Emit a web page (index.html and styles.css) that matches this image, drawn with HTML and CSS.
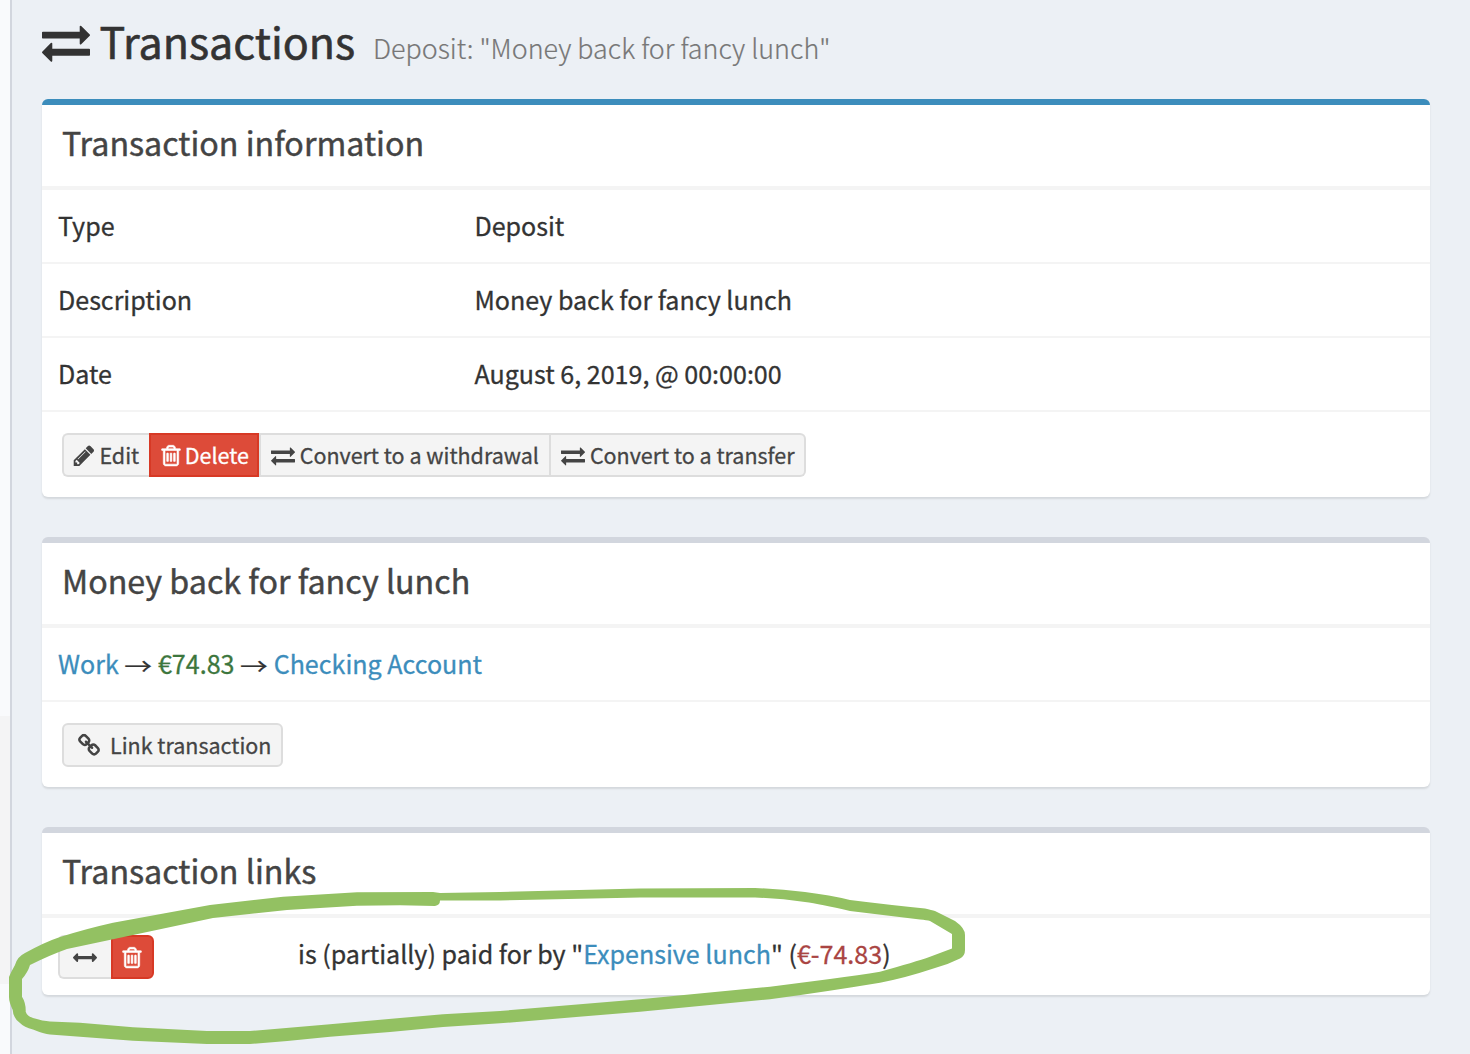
FILE: index.html
```html
<!DOCTYPE html>
<html lang="en">
<head>
<meta charset="utf-8">
<title>Transactions</title>
<link rel="stylesheet" href="styles.css">
</head>
<body>
<svg class="sprite" aria-hidden="true">
  <symbol id="exchange" viewBox="0 0 1792 1792"><path d="M1792 1184v192q0 13-9.5 22.5t-22.5 9.5h-1376v192q0 13-9.5 22.5t-22.5 9.5q-12 0-24-10l-319-320q-9-9-9-22 0-14 9-23l320-320q9-9 23-9 13 0 22.5 9.5t9.5 22.5v192h1376q13 0 22.5 9.5t9.5 22.5zm0-544q0 14-9 23l-320 320q-9 9-23 9-13 0-22.5-9.5t-9.5-22.5v-192h-1376q-13 0-22.5-9.5t-9.5-22.5v-192q0-13 9.5-22.5t22.5-9.5h1376v-192q0-14 9-23t23-9q12 0 24 10l319 319q9 9 9 23z"/></symbol>
  <symbol id="pencil" viewBox="0 0 1792 1792"><path d="M491 1536l91-91-235-235-91 91v107h128v128h107zm523-928q0-22-22-22-10 0-17 7l-542 542q-7 7-7 17 0 22 22 22 10 0 17-7l542-542q7-7 7-17zm-54-192l416 416-832 832h-416v-416zm683 96q0 53-37 90l-166 166-416-416 166-165q36-38 90-38 53 0 91 38l235 234q37 39 37 91z"/></symbol>
  <symbol id="trash" viewBox="0 0 1792 1792"><path d="M704 736v576q0 14-9 23t-23 9h-64q-14 0-23-9t-9-23v-576q0-14 9-23t23-9h64q14 0 23 9t9 23zm256 0v576q0 14-9 23t-23 9h-64q-14 0-23-9t-9-23v-576q0-14 9-23t23-9h64q14 0 23 9t9 23zm256 0v576q0 14-9 23t-23 9h-64q-14 0-23-9t-9-23v-576q0-14 9-23t23-9h64q14 0 23 9t9 23zm128 724v-948h-896v948q0 22 7 40.5t14.5 27 10.5 8.5h832q3 0 10.5-8.5t14.5-27 7-40.5zm-672-1076h448l-48-117q-7-9-17-11h-317q-10 2-17 11zm928 32v64q0 14-9 23t-23 9h-96v948q0 83-47 143.5t-113 60.5h-832q-66 0-113-58.5t-47-141.5v-952h-96q-14 0-23-9t-9-23v-64q0-14 9-23t23-9h309l70-167q15-37 54-63t79-26h320q40 0 79 26t54 63l70 167h309q14 0 23 9t9 23z"/></symbol>
  <symbol id="link" viewBox="0 0 1792 1792"><path d="M1520 1216q0-40-28-68l-208-208q-28-28-68-28-42 0-72 32 3 3 19 18.5t21.5 21.5 15 19 13 25.5 3.5 27.5q0 40-28 68t-68 28q-15 0-27.5-3.5t-25.5-13-19-15-21.5-21.5-18.5-19q-33 31-33 73 0 40 28 68l206 207q27 27 68 27 40 0 68-26l147-146q28-28 28-67zm-703-705q0-40-28-68l-206-207q-28-28-68-28-39 0-68 27l-147 146q-28 28-28 67 0 40 28 68l208 208q27 27 68 27 42 0 72-31-3-3-19-18.5t-21.5-21.5-15-19-13-25.5-3.5-27.5q0-40 28-68t68-28q15 0 27.5 3.5t25.5 13 19 15 21.5 21.5 18.5 19q33-31 33-73zm895 705q0 120-85 203l-147 146q-83 83-203 83-121 0-204-85l-206-207q-83-83-83-203 0-123 88-209l-88-88q-86 88-208 88-120 0-204-84l-208-208q-84-84-84-204t85-203l147-146q83-83 203-83 121 0 204 85l206 207q83 83 83 203 0 123-88 209l88 88q86-88 208-88 120 0 204 84l208 208q84 84 84 204z"/></symbol>
  <symbol id="arrows-h" viewBox="0 0 1792 1792"><path d="M1792 896q0 26-19 45l-256 256q-19 19-45 19t-45-19-19-45v-128h-1024v128q0 26-19 45t-45 19-45-19l-256-256q-19-19-19-45t19-45l256-256q19-19 45-19t45 19 19 45v128h1024v-128q0-26 19-45t45-19 45 19l256 256q19 19 19 45z"/></symbol>
</svg>
<div class="layout">
  <aside class="sidebar"><div class="sidebar-item"></div></aside>
  <main class="content">
    <header class="page-header">
      <svg class="icon icon-large"><use href="#exchange"/></svg>
      <h1 class="page-title">Transactions</h1>
      <span class="page-subtitle">Deposit: "Money back for fancy lunch"</span>
    </header>

    <section class="box box-primary">
      <h2 class="box-header">Transaction information</h2>
      <dl class="row"><dt>Type</dt><dd>Deposit</dd></dl>
      <dl class="row"><dt>Description</dt><dd>Money back for fancy lunch</dd></dl>
      <dl class="row"><dt>Date</dt><dd>August 6, 2019, @ 00:00:00</dd></dl>
      <div class="box-footer">
        <div class="btn-group">
          <a class="btn btn-edit"><svg class="icon"><use href="#pencil"/></svg><span>Edit</span></a>
          <a class="btn btn-danger btn-delete"><svg class="icon"><use href="#trash"/></svg><span>Delete</span></a>
          <a class="btn btn-withdrawal"><svg class="icon"><use href="#exchange"/></svg><span>Convert to a withdrawal</span></a>
          <a class="btn btn-transfer"><svg class="icon"><use href="#exchange"/></svg><span>Convert to a transfer</span></a>
        </div>
      </div>
    </section>

    <section class="box">
      <h2 class="box-header">Money back for fancy lunch</h2>
      <div class="row flow"><a class="link">Work</a><span class="arrow">→</span><span class="income">€74.83</span><span class="arrow">→</span><a class="link">Checking Account</a></div>
      <div class="box-footer">
        <div class="btn-group">
          <a class="btn btn-link"><svg class="icon"><use href="#link"/></svg><span>Link transaction</span></a>
        </div>
      </div>
    </section>

    <section class="box">
      <h2 class="box-header">Transaction links</h2>
      <div class="link-row">
        <div class="btn-group">
          <a class="btn btn-switch"><svg class="icon"><use href="#arrows-h"/></svg></a>
          <a class="btn btn-danger btn-remove"><svg class="icon"><use href="#trash"/></svg></a>
        </div>
        <p class="link-text">is (partially) paid for by "<a class="link">Expensive lunch</a>" (<span class="expense">€-74.83</span>)</p>
      </div>
    </section>
  </main>
</div>
<svg class="marker" viewBox="0 0 1470 1054" aria-hidden="true">
  <path fill-rule="evenodd" d="M440 893L500 892L640 888.5L755 888Q780 889 805 892Q830 895 850 900Q890 905 925 908.5Q932 910 935 911L955 921Q965 928 965 935V950Q965 956 960 958.500Q948 964.500 935 968Q905 978 880 982.700Q830 991 770 999.300L640 1011.700L500 1023.300L443 1027L390 1032L330 1036.700Q290 1041 250 1044H207L133 1040.700L80 1036.700L50 1034.500Q44 1034 33 1029.500Q24 1027 20 1023Q13 1018 12.700 1010Q9 1002 9 997V977Q11 972 15 965Q17 957 25 953Q45 942 60 937Q85 929 113 922.700L210 905L283 896.700L357 892.300L433 892ZM440 900.500Q440 905 435 906L400 905.300L357 905.700L287 910L213 918L133 935L67 949Q50 955 30 965Q28 972 22 979V996.700Q26 1003 25.700 1011.700Q27 1016 33 1018Q43 1021 50 1021.500L80 1022.700L133 1027.300L207 1031H250L330 1024.300L400 1018L443 1014.300L500 1011L640 999.300L770 986.700L830 979Q860 975 880 971.700Q915 962 930 956.700L952 948.500V934L930 921Q927 920 920 919.500L850 911Q820 904 805 902Q780 898.500 755 897.500H640L500 900.500Z"/>
</svg>
</body>
</html>
```
FILE: styles.css
```css
* { box-sizing: border-box; }

body {
  margin: 0;
  height: 1054px;
  overflow: hidden;
  background: #ecf0f5;
  color: #333;
  font-family: "Noto Sans CJK SC", "Open Sans", sans-serif;
  font-size: 25.07px;
  line-height: 40px;
  -webkit-text-stroke: .3px currentColor;
}

.sprite { display: none; }

.layout { display: flex; height: 1054px; }

.sidebar {
  flex: none;
  width: 12px;
  padding-top: 716px;
  background: #f9fafc;
  border-right: 2px solid #d2d6de;
}
.sidebar-item { height: 268px; background: #f4f4f5; }

.content { flex: 1; min-width: 0; padding: 0 40px 0 30px; }

.icon { display: block; flex: none; width: 24px; height: 24px; fill: currentColor; }

.page-header { display: flex; height: 99px; padding-top: 16px; white-space: nowrap; }
.icon-large { width: 48px; height: 48px; margin-top: 2px; }
.page-title { margin: 0 0 0 9.5px; width: 273.5px; font-size: 43px; font-weight: 400; line-height: 48px; -webkit-text-stroke-width: .6px; }
.page-subtitle { margin-top: 8px; color: #777; font-size: 26.86px; font-weight: 300; line-height: 48px; -webkit-text-stroke-width: .2px; }

.box {
  margin-bottom: 40px;
  border-top: 6px solid #d2d6de;
  border-radius: 6px;
  background: #fff;
  box-shadow: 0 2px 2px rgba(0, 0, 0, .1);
}
.box-primary { border-top-color: #3c8dbc; }

.box-header {
  margin: 0;
  height: 85px;
  padding: 17px 20px 0;
  border-bottom: 4px solid #f4f4f4;
  color: #444;
  font-size: 32.23px;
  font-weight: 400;
  line-height: 40px;
  -webkit-text-stroke-width: .45px;
}

.row {
  display: flex;
  align-items: center;
  height: 74px;
  margin: 0;
  padding: 0 16px 2px;
  border-bottom: 2px solid #f4f4f4;
  white-space: nowrap;
}
.row dt { width: 416.4px; }
.row dd { margin: 0; }

.flow { gap: 5.6px; }
.arrow { width: 28px; font-size: 28px; transform: translateY(2.5px) scaleY(.8); }

.box-footer { height: 85px; padding: 21px 20px 0; }

.btn-group { display: flex; }
.btn {
  display: flex;
  align-items: center;
  height: 44px;
  border: 2px solid #ddd;
  border-left-width: 0;
  background: #f4f4f4;
  color: #444;
  font-size: 21.49px;
  line-height: 40px;
  white-space: nowrap;
}
.btn:first-child { border-left-width: 2px; border-radius: 6px 0 0 6px; }
.btn:last-child { border-radius: 0 6px 6px 0; }
.btn:only-child { border-radius: 6px; }
.btn .icon { transform: translateY(.6px); }
.btn-danger { border: 2px solid #d73925; background: #dd4b39; color: #fff; }
.btn-danger .icon { stroke: currentColor; stroke-width: 45px; }

.btn-edit { width: 87px; padding-left: 8px; border-right: 0; gap: 3.4px; }
.btn-delete { width: 110px; padding-left: 7.6px; gap: 2.2px; }
.btn-withdrawal { width: 292px; padding-left: 10px; gap: 4.7px; border-left-width: 2px; }
.btn-transfer { width: 255px; padding-left: 10px; gap: 4.9px; }
.btn-link { width: 221px; padding-left: 13px; gap: 9px; }
.btn-switch { width: 53px; padding-left: 13.3px; border-right: 0; }
.btn-remove { width: 43px; padding-left: 7.3px; }

.link-row { display: flex; height: 77px; padding: 17px 16px 0; }
.link-row .btn-group { width: 240px; }
.link-text { margin: 0; line-height: 36px; white-space: nowrap; }

.link { color: #3c8dbc; }
.income { color: #3c763d; }
.expense { color: #a94442; }

.marker {
  position: absolute;
  top: 0;
  left: 0;
  width: 1470px;
  height: 1054px;
  fill: #93c162;
  pointer-events: none;
}
```
